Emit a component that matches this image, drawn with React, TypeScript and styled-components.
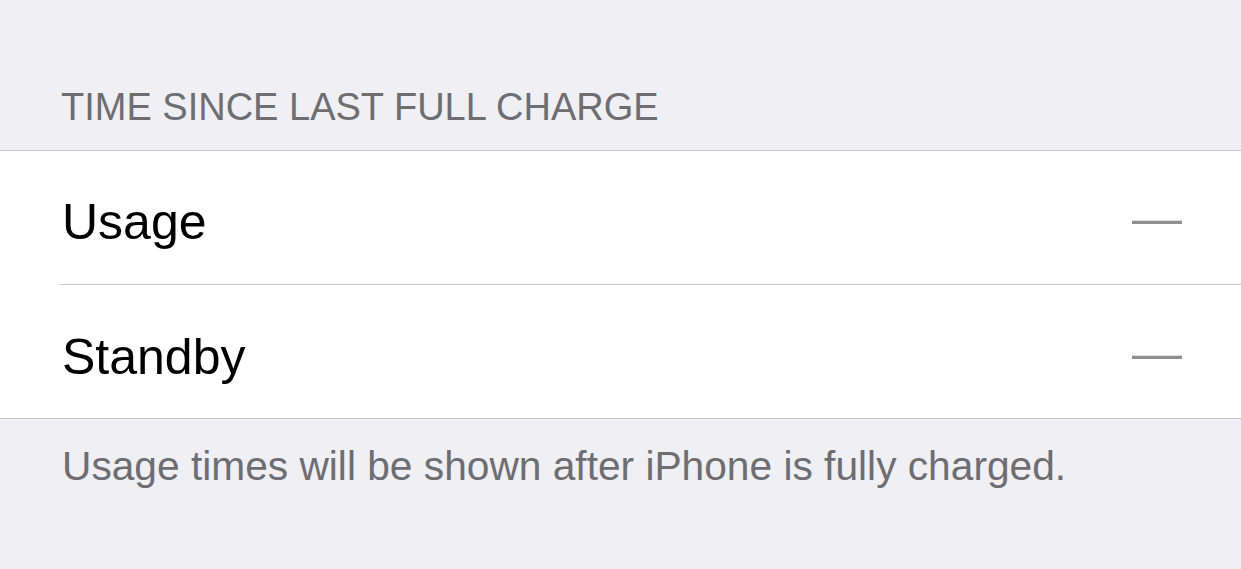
import React from "react";
import styled, { createGlobalStyle } from "styled-components";

const Global = createGlobalStyle`
  html, body { margin: 0; padding: 0; background: #efeff4; }
  body { font-family: "Liberation Sans", Arial, sans-serif; -webkit-font-smoothing: antialiased; }
`;

const Page = styled.div`
  width: 1241px;
  height: 569px;
  background: #efeff4;
  display: flex;
  flex-direction: column;
  overflow: hidden;
`;

const SectionHeader = styled.div`
  padding: 84px 0 20px 61px;
  font-size: 38px;
  line-height: 46px;
  color: #6d6d72;
`;

const Group = styled.div`
  background: #ffffff;
  border-top: 1px solid #c8c7cc;
  border-bottom: 1px solid #c8c7cc;
`;

const Row = styled.div<{ $last?: boolean }>`
  height: ${(p) => (p.$last ? "133px" : "134px")};
  margin-left: 60px;
  box-sizing: border-box;
  border-bottom: ${(p) => (p.$last ? "none" : "1px solid #c8c7cc")};
  display: flex;
  align-items: center;
  justify-content: space-between;
  padding: ${(p) => (p.$last ? "10px" : "9px")} 59px 0 2px;
`;

const Label = styled.span`
  font-size: 50px;
  line-height: 60px;
  color: #000000;
`;

const Value = styled.span`
  font-size: 50px;
  line-height: 60px;
  color: #8e8e93;
  margin-bottom: 8px;
`;

const Footer = styled.div`
  padding: 22px 0 0 62px;
  font-size: 40.7px;
  line-height: 50px;
  color: #6d6d72;
`;

export default function App() {
  return (
    <Page>
      <Global />
      <SectionHeader>TIME SINCE LAST FULL CHARGE</SectionHeader>
      <Group>
        <Row>
          <Label>Usage</Label>
          <Value>—</Value>
        </Row>
        <Row $last>
          <Label>Standby</Label>
          <Value>—</Value>
        </Row>
      </Group>
      <Footer>Usage times will be shown after iPhone is fully charged.</Footer>
    </Page>
  );
}
